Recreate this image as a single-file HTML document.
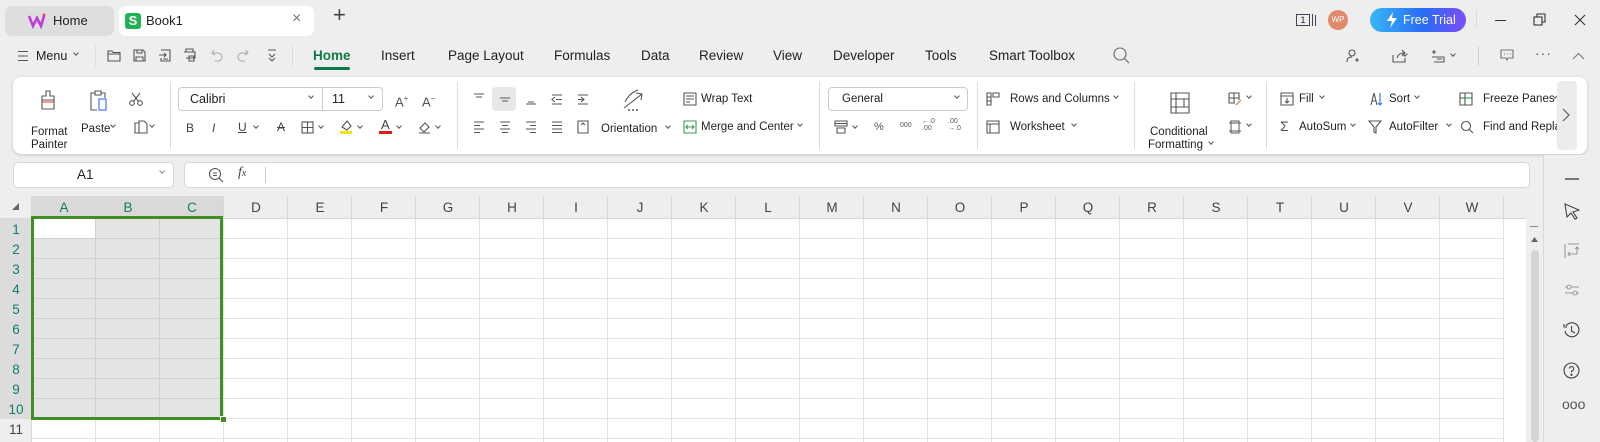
<!DOCTYPE html>
<html><head><meta charset="utf-8"><style>
*{margin:0;padding:0;box-sizing:border-box}
body{width:1600px;height:442px;overflow:hidden;background:#eeeeee;font-family:"Liberation Sans",sans-serif;color:#222;position:relative}
.a{position:absolute}
.t{position:absolute;font-size:11.5px;color:#222;white-space:nowrap;line-height:14px}
.ic{position:absolute;stroke:#555;fill:none;stroke-width:1.1}
.car{position:absolute;width:4px;height:4px;border-right:1.2px solid #555;border-bottom:1.2px solid #555;transform:rotate(45deg)}
.sep{position:absolute;width:1px;background:#dcdcdc}
.ch{position:absolute;top:196px;height:23px;width:64px;text-align:center;font-size:13.5px;line-height:23px;color:#444}
.rh{position:absolute;left:0;width:32px;height:20px;text-align:center;font-size:13.5px;line-height:20px;color:#444}
</style></head><body>
<!-- tabs -->
<div class="a" style="left:5px;top:6px;width:109px;height:30px;background:#dedede;border-radius:7px"></div>
<svg class="a" style="left:28px;top:13px" width="18" height="16" viewBox="0 0 18 16"><path d="M1 3 L5 13 L9 5 L13 13 L16 3" stroke="#c03bd8" stroke-width="2.6" fill="none"/><circle cx="16" cy="2" r="1.5" fill="#e04080"/></svg>
<div class="t" style="left:53px;top:14px;font-size:13px">Home</div>
<div class="a" style="left:119px;top:6px;width:195px;height:30px;background:#fff;border-radius:7px"></div>
<div class="a" style="left:125px;top:13px;width:16px;height:16px;background:#1fb256;border-radius:3px;color:#fff;font-size:13px;font-weight:bold;text-align:center;line-height:16px">S</div>
<div class="t" style="left:146px;top:14px;font-size:13px">Book1</div>
<div class="t" style="left:292px;top:12px;font-size:16px;color:#777">×</div>
<div class="t" style="left:333px;top:8px;font-size:22px;color:#444">+</div>
<!-- top right -->
<div class="a" style="left:1296px;top:14px;width:14px;height:12px;border:1.3px solid #445;font-size:9px;text-align:center;line-height:10px">1</div>
<div class="a" style="left:1312px;top:14px;width:1px;height:12px;background:#445"></div><div class="a" style="left:1315px;top:15px;width:1px;height:11px;background:#445"></div>
<div class="a" style="left:1328px;top:10px;width:20px;height:20px;border-radius:50%;background:#e38a6c;color:#fff;font-size:8px;text-align:center;line-height:20px">WP</div>
<div class="a" style="left:1370px;top:8px;width:96px;height:24px;border-radius:12px;background:linear-gradient(90deg,#38b6f7,#2a6cf6 55%,#7b4df5);color:#fff;font-size:12.5px;line-height:24px;padding-left:33px">Free Trial</div>
<svg class="a" style="left:1386px;top:12px" width="12" height="16" viewBox="0 0 12 16"><path d="M7 0 L1 9 H6 L4 16 L11 6 H6 Z" fill="#fff"/></svg>
<div class="sep" style="left:1476px;top:10px;height:18px"></div>
<div class="a" style="left:1495px;top:20px;width:11px;height:1.3px;background:#333"></div>
<svg class="ic" style="left:1533px;top:13px;stroke:#333" width="14" height="14"><rect x="1" y="4" width="8" height="8"/><path d="M4 4V1H12V9H9"/></svg>
<svg class="ic" style="left:1574px;top:14px;stroke:#333" width="12" height="12"><path d="M1 1L11 11M11 1L1 11"/></svg>
<!-- menu row -->
<svg class="ic" style="left:17px;top:50px" width="12" height="12"><path d="M1 1.5H11M1 6H11M1 10.5H11"/></svg>
<div class="t" style="left:36px;top:49px;font-size:12.5px">Menu</div>
<div class="car" style="left:74px;top:51px"></div>
<div class="sep" style="left:95px;top:46px;height:20px"></div>
<svg class="ic" style="left:107px;top:49px" width="14" height="13"><path d="M1 2H5L6 3.5H13V12H1Z M1 5H13"/></svg>
<svg class="ic" style="left:133px;top:49px" width="13" height="13"><path d="M1 1H10L12 3V12H1Z M4 1V4H9V1 M3 12V8H10V12"/></svg>
<svg class="ic" style="left:158px;top:49px" width="13" height="13"><path d="M3 1H12V12H3V9 M1 6H8M6 4L8 6L6 8 M5 10H10"/></svg>
<svg class="ic" style="left:183px;top:48px" width="14" height="14"><path d="M3 4V1H10V4 M1 4H12V10H3 M6 8H11V13H6Z"/></svg>
<svg class="ic" style="left:211px;top:49px;stroke:#aaa" width="12" height="13"><path d="M3 1L1 4L4 6 M1 4H7A4 4 0 0 1 7 12H4"/></svg>
<svg class="ic" style="left:237px;top:49px;stroke:#aaa" width="12" height="13"><path d="M9 1L11 4L8 6 M11 4H5A4 4 0 0 0 5 12H8"/></svg>
<svg class="ic" style="left:266px;top:48px" width="12" height="14"><path d="M2 2H10 M3 6L6 9L9 6 M3 10L6 13L9 10"/></svg>
<div class="sep" style="left:292px;top:46px;height:20px"></div>
<div class="t" style="left:313px;top:49px;font-size:13.5px;font-weight:bold;color:#0e7a4a">Home</div>
<div class="a" style="left:314px;top:67px;width:36px;height:2.5px;background:#0e7a4a;border-radius:2px"></div>
<div class="t" style="left:381px;top:49px;font-size:13.5px">Insert</div>
<div class="t" style="left:448px;top:49px;font-size:13.5px">Page Layout</div>
<div class="t" style="left:554px;top:49px;font-size:13.5px">Formulas</div>
<div class="t" style="left:641px;top:49px;font-size:13.5px">Data</div>
<div class="t" style="left:699px;top:49px;font-size:13.5px">Review</div>
<div class="t" style="left:773px;top:49px;font-size:13.5px">View</div>
<div class="t" style="left:833px;top:49px;font-size:13.5px">Developer</div>
<div class="t" style="left:925px;top:49px;font-size:13.5px">Tools</div>
<div class="t" style="left:989px;top:49px;font-size:13.5px">Smart Toolbox</div>
<svg class="ic" style="left:1113px;top:47px;stroke:#666" width="17" height="17"><circle cx="7" cy="7" r="6"/><path d="M11.5 11.5L16 16"/></svg>
<svg class="ic" style="left:1346px;top:49px" width="14" height="14"><circle cx="6" cy="4" r="3"/><path d="M1 13C1 9 3 8 6 8 M9 11H13M11 9V13"/></svg>
<svg class="ic" style="left:1392px;top:49px" width="16" height="14"><path d="M1 6V13H13V9 M5 9C6 5 9 4 12 4 M10 1L13 4L10 7"/></svg>
<div class="car" style="left:1403px;top:52px"></div>
<svg class="ic" style="left:1431px;top:49px" width="14" height="14"><path d="M3 1V5M1 3H5 M1 8H13V13H3 M6 10H11"/></svg>
<div class="car" style="left:1451px;top:52px"></div>
<div class="sep" style="left:1478px;top:46px;height:20px;background:#d0d0d0"></div>
<svg class="ic" style="left:1500px;top:49px;stroke:#777" width="14" height="13"><path d="M1 1H13V9H8L7 11L6 9H1Z M4 5H5M7 5H8M10 5H11"/></svg>
<div class="t" style="left:1535px;top:46px;font-size:14px;color:#555;letter-spacing:1px">···</div>
<svg class="ic" style="left:1572px;top:52px;stroke:#777" width="13" height="8"><path d="M1 7L6.5 1.5L12 7"/></svg>
<!-- ribbon -->
<div class="a" style="left:13px;top:77px;width:1574px;height:77px;background:#fff;border-radius:8px;box-shadow:0 1px 3px rgba(0,0,0,.18)"></div>
<svg class="ic" style="left:39px;top:90px" width="20" height="20"><path d="M7 1H11V6H15V10H3V6H7Z M3 10V19H15V10"/><path d="M3 12H15" stroke="#d9541e"/></svg>
<div class="t" style="left:31px;top:125px">Format</div><div class="t" style="left:31px;top:138px">Painter</div>
<svg class="ic" style="left:89px;top:90px" width="20" height="22"><path d="M6 3H2V20H8 M12 3H16V8 M6 1H12V5H6Z"/><rect x="10" y="9" width="7" height="11" stroke="#2a6cf6"/></svg>
<div class="t" style="left:81px;top:122px">Paste</div><div class="car" style="left:111px;top:123px"></div>
<svg class="ic" style="left:129px;top:92px" width="14" height="14"><circle cx="3" cy="11" r="2.3"/><circle cx="11" cy="11" r="2.3"/><path d="M4.5 9.5L11 1M9.5 9.5L3 1"/></svg>
<svg class="ic" style="left:134px;top:120px" width="14" height="14"><path d="M5 3H1V13H5 M5 1H10L13 4V13H5Z"/></svg>
<div class="car" style="left:150px;top:123px"></div>
<div class="sep" style="left:170px;top:82px;height:67px"></div>
<div class="a" style="left:178px;top:87px;width:205px;height:24px;border:1px solid #ccc;border-radius:4px"></div>
<div class="a" style="left:322px;top:87px;width:1px;height:24px;background:#ccc"></div>
<div class="t" style="left:190px;top:92px;font-size:12.5px">Calibri</div><div class="car" style="left:309px;top:94px"></div>
<div class="t" style="left:332px;top:92px;font-size:12.5px">11</div><div class="car" style="left:369px;top:94px"></div>
<div class="t" style="left:395px;top:92px;font-size:13px;color:#555">A<sup style="font-size:8px">+</sup></div>
<div class="t" style="left:422px;top:92px;font-size:13px;color:#555">A<sup style="font-size:8px">−</sup></div>
<div class="t" style="left:186px;top:121px;font-size:12px;color:#444">B</div>
<div class="t" style="left:212px;top:121px;font-size:12px;color:#444;font-style:italic">I</div>
<div class="t" style="left:238px;top:120px;font-size:12px;color:#444;text-decoration:underline">U</div><div class="car" style="left:254px;top:124px"></div>
<div class="t" style="left:277px;top:120px;font-size:12px;color:#444;text-decoration:line-through">A</div>
<svg class="ic" style="left:301px;top:121px" width="13" height="13"><rect x="1" y="1" width="11" height="11"/><path d="M6.5 1V12M1 6.5H12"/></svg><div class="car" style="left:319px;top:124px"></div>
<svg class="ic" style="left:339px;top:119px" width="14" height="15"><path d="M3 8L8 2L12 7L8 11Z"/><rect x="1" y="12" width="12" height="3" fill="#f5e21a" stroke="none"/></svg><div class="car" style="left:358px;top:124px"></div>
<div class="t" style="left:381px;top:118px;font-size:13px;color:#444">A</div><div class="a" style="left:379px;top:131px;width:13px;height:3px;background:#e01e1e"></div><div class="car" style="left:397px;top:124px"></div>
<svg class="ic" style="left:418px;top:120px" width="14" height="14"><path d="M2 8L7 3L11 7L6 12Z M1 13H12"/></svg><div class="car" style="left:436px;top:124px"></div>
<div class="sep" style="left:457px;top:82px;height:67px"></div>
<div class="a" style="left:492px;top:87px;width:24px;height:24px;background:#e7e7e7;border-radius:4px"></div>
<svg class="ic" style="left:472px;top:92px" width="120" height="14"><path d="M2 2H12 M4 5H10"/><path d="M28 6H38M30 9H36"/><path d="M54 12H64M56 10H62"/><path d="M80 3H90M80 12H90M84 7.5H90 M83 5L80 7.5L83 10" /><path d="M106 3H116M106 12H116M106 7.5H112 M109 5L112 7.5L109 10"/></svg>
<svg class="ic" style="left:472px;top:120px" width="120" height="14"><path d="M2 2H12M2 5.5H8M2 9H12M2 12.5H8"/><path d="M28 2H38M30 5.5H36M28 9H38M30 12.5H36"/><path d="M54 2H64M58 5.5H64M54 9H64M58 12.5H64"/><path d="M80 2H90M80 5.5H90M80 9H90M80 12.5H90"/><path d="M106 1H116V13H106Z M109 5L111 3L113 5"/></svg>
<svg class="ic" style="left:622px;top:88px" width="22" height="24"><path d="M3 14C6 8 10 4 16 2 M2 20L20 6 M14 5L20 6L19 12"/><path d="M6 22H8M10 22H12M14 22H16" stroke-width="1.5"/></svg>
<div class="t" style="left:601px;top:122px">Orientation</div><div class="car" style="left:666px;top:124px"></div>
<svg class="ic" style="left:683px;top:92px" width="14" height="14"><path d="M1 1H13V13H1Z M3 4H11M3 7H11M3 10H7"/></svg>
<div class="t" style="left:701px;top:92px">Wrap Text</div>
<svg class="ic" style="left:683px;top:120px;stroke:#3a9a5a" width="14" height="14"><path d="M1 1H13V13H1Z M3 7H11 M5 5L3 7L5 9 M9 5L11 7L9 9"/></svg>
<div class="t" style="left:701px;top:120px">Merge and Center</div><div class="car" style="left:798px;top:122px"></div>
<div class="sep" style="left:819px;top:82px;height:67px"></div>
<div class="a" style="left:828px;top:87px;width:140px;height:24px;border:1px solid #ccc;border-radius:4px"></div>
<div class="t" style="left:842px;top:92px">General</div><div class="car" style="left:955px;top:94px"></div>
<svg class="ic" style="left:834px;top:120px" width="14" height="14"><path d="M1 1H13V6H1Z M3 8H11V13H3Z M1 3.5H13"/></svg><div class="car" style="left:853px;top:124px"></div>
<div class="t" style="left:874px;top:120px;font-size:11px;color:#555">%</div>
<div class="t" style="left:900px;top:119px;font-size:7px;color:#555">000</div>
<div class="t" style="left:922px;top:118px;font-size:7px;color:#555;line-height:7px">←.0<br>.00</div>
<div class="t" style="left:948px;top:118px;font-size:7px;color:#555;line-height:7px">.00<br>→.0</div>
<div class="sep" style="left:977px;top:82px;height:67px"></div>
<svg class="ic" style="left:986px;top:92px" width="14" height="14"><path d="M1 1H5V13H1Z M1 5H5M1 9H5 M7 1H13V5H7Z"/></svg>
<div class="t" style="left:1010px;top:92px">Rows and Columns</div><div class="car" style="left:1114px;top:94px"></div>
<svg class="ic" style="left:986px;top:120px" width="14" height="14"><path d="M1 1H13V13H1Z M1 4H13 M4 4V13"/></svg>
<div class="t" style="left:1010px;top:120px">Worksheet</div><div class="car" style="left:1072px;top:122px"></div>
<div class="sep" style="left:1134px;top:82px;height:67px"></div>
<svg class="ic" style="left:1170px;top:92px" width="20" height="22"><path d="M1 1H19V21H1Z M1 7H19M1 15H19M6 1V21M14 7V15"/></svg>
<div class="t" style="left:1150px;top:125px">Conditional</div><div class="t" style="left:1148px;top:138px">Formatting</div><div class="car" style="left:1209px;top:140px"></div>
<svg class="ic" style="left:1228px;top:92px" width="14" height="14"><path d="M1 1H11V8 M1 1V11H7 M1 6H11M6 1V11"/><path d="M8 13L13 8" stroke="#e0702a"/></svg><div class="car" style="left:1247px;top:94px"></div>
<svg class="ic" style="left:1228px;top:120px" width="14" height="14"><path d="M3 1H11V13H3Z M1 3H13M1 11H13" stroke-width="1"/></svg><div class="car" style="left:1247px;top:122px"></div>
<div class="sep" style="left:1266px;top:82px;height:67px"></div>
<svg class="ic" style="left:1280px;top:92px" width="14" height="14"><path d="M1 1H13V13H1Z M1 4H13 M7 6V11M5 9L7 11L9 9"/></svg>
<div class="t" style="left:1299px;top:92px">Fill</div><div class="car" style="left:1320px;top:94px"></div>
<svg class="ic" style="left:1370px;top:92px" width="14" height="14"><path d="M1 13L4 1L7 13M2 9H6"/><path d="M10 1V13M8 11L10 13L12 11" stroke="#2a6cf6"/></svg>
<div class="t" style="left:1389px;top:92px">Sort</div><div class="car" style="left:1415px;top:94px"></div>
<svg class="ic" style="left:1459px;top:92px" width="14" height="14"><path d="M1 1H13V13H1Z M1 6H13M6 1V13"/><path d="M6 6H13M6 6V13" stroke="#1a8a4a"/></svg>
<div class="t" style="left:1483px;top:92px">Freeze Panes</div><div class="car" style="left:1553px;top:94px"></div>
<div class="t" style="left:1280px;top:119px;font-size:14px;color:#555">Σ</div>
<div class="t" style="left:1299px;top:120px">AutoSum</div><div class="car" style="left:1351px;top:122px"></div>
<svg class="ic" style="left:1368px;top:120px" width="14" height="14"><path d="M1 1H13L8 7V13L6 12V7Z"/></svg>
<div class="t" style="left:1389px;top:120px">AutoFilter</div><div class="car" style="left:1447px;top:122px"></div>
<svg class="ic" style="left:1460px;top:120px" width="14" height="14"><circle cx="6" cy="6" r="4.5"/><path d="M9.5 9.5L13 13"/></svg>
<div class="a" style="left:1480px;top:115px;width:77px;height:20px;overflow:hidden"><div class="t" style="left:3px;top:5px">Find and Replace</div></div>
<div class="a" style="left:1557px;top:81px;width:20px;height:69px;background:#ececec;border-radius:4px"></div>
<svg class="ic" style="left:1562px;top:108px;stroke:#555" width="8" height="14"><path d="M1 1L7 7L1 13"/></svg>
<!-- formula bar -->
<div class="a" style="left:13px;top:162px;width:161px;height:26px;background:#fff;border:1px solid #d8d8d8;border-radius:5px"></div>
<div class="t" style="left:77px;top:168px;font-size:13.5px">A1</div><div class="car" style="left:160px;top:169px;border-color:#888"></div>
<div class="a" style="left:184px;top:162px;width:1346px;height:26px;background:#fff;border:1px solid #d8d8d8;border-radius:5px"></div>
<svg class="ic" style="left:208px;top:167px;stroke:#555" width="16" height="16"><circle cx="7" cy="7" r="5.5"/><path d="M11 11L15 15 M5 6H9M5 8.5H9"/></svg>
<div class="t" style="left:238px;top:166px;font-size:14px;font-style:italic;font-family:'Liberation Serif',serif;color:#444">f<span style="font-size:10px">x</span></div>
<div class="a" style="left:265px;top:167px;width:1px;height:16px;background:#ccc"></div>
<!-- grid -->
<div class="a" style="left:32px;top:219px;width:1494px;height:223px;background-color:#fff;background-image:linear-gradient(90deg,transparent 63px,#e2e2e2 63px),linear-gradient(180deg,transparent 19px,#e2e2e2 19px);background-size:64px 20px"></div>
<div class="a" style="left:0;top:196px;width:1526px;height:23px;background:#eeeeee;border-bottom:1px solid #d8d8d8;background-image:linear-gradient(90deg,transparent 63px,#d8d8d8 63px);background-size:64px 23px;background-position:32px 0"></div>
<div class="a" style="left:0;top:219px;width:32px;height:223px;background:#eeeeee;border-right:1px solid #d8d8d8"></div>
<div class="a" style="left:32px;top:196px;width:191px;height:23px;background:#d9d9d9"></div>
<div class="a" style="left:0;top:219px;width:32px;height:200px;background:#dcdcdc"></div>
<svg class="a" style="left:11px;top:202px" width="9" height="9"><path d="M8 1V8H1Z" fill="#666"/></svg>
<div class="a" style="left:32px;top:219px;width:191px;height:200px;background-color:#e4e4e4;background-image:linear-gradient(90deg,transparent 63px,#d0d0d0 63px),linear-gradient(180deg,transparent 19px,#d0d0d0 19px);background-size:64px 20px"></div>
<div class="a" style="left:34px;top:219px;width:61px;height:19px;background:#fff"></div>
<div class="a" style="left:31px;top:216px;width:192px;height:204px;border:3px solid #3f8f24"></div>
<div class="a" style="left:220px;top:416px;width:7px;height:7px;background:#3f8f24;border:1px solid #fff"></div>
<div class="ch" style="left:32px;color:#0f8060">A</div><div class="ch" style="left:96px;color:#0f8060">B</div><div class="ch" style="left:160px;color:#0f8060">C</div>
<div class="ch" style="left:224px">D</div><div class="ch" style="left:288px">E</div><div class="ch" style="left:352px">F</div><div class="ch" style="left:416px">G</div><div class="ch" style="left:480px">H</div><div class="ch" style="left:544px">I</div><div class="ch" style="left:608px">J</div><div class="ch" style="left:672px">K</div><div class="ch" style="left:736px">L</div><div class="ch" style="left:800px">M</div><div class="ch" style="left:864px">N</div><div class="ch" style="left:928px">O</div><div class="ch" style="left:992px">P</div><div class="ch" style="left:1056px">Q</div><div class="ch" style="left:1120px">R</div><div class="ch" style="left:1184px">S</div><div class="ch" style="left:1248px">T</div><div class="ch" style="left:1312px">U</div><div class="ch" style="left:1376px">V</div><div class="ch" style="left:1440px">W</div>
<div class="rh" style="top:220px;color:#0f8060">1</div><div class="rh" style="top:240px;color:#0f8060">2</div><div class="rh" style="top:260px;color:#0f8060">3</div><div class="rh" style="top:280px;color:#0f8060">4</div><div class="rh" style="top:300px;color:#0f8060">5</div><div class="rh" style="top:320px;color:#0f8060">6</div><div class="rh" style="top:340px;color:#0f8060">7</div><div class="rh" style="top:360px;color:#0f8060">8</div><div class="rh" style="top:380px;color:#0f8060">9</div><div class="rh" style="top:400px;color:#0f8060">10</div><div class="rh" style="top:420px">11</div>
<!-- scrollbar -->
<div class="a" style="left:1504px;top:219px;width:22px;height:223px;background:#fff"></div>
<div class="a" style="left:1526px;top:196px;width:17px;height:246px;background:#eeeeee"></div>
<div class="a" style="left:1530px;top:226px;width:8px;height:1px;background:#888"></div>
<svg class="a" style="left:1531px;top:237px" width="7" height="5"><path d="M3.5 0L7 5H0Z" fill="#666"/></svg>
<div class="a" style="left:1531px;top:250px;width:8px;height:192px;background:#d4d4d4;border-radius:4px"></div>
<!-- side panel -->
<div class="a" style="left:1543px;top:155px;width:57px;height:287px;background:#eeeeee;border-left:1px solid #d8d8d8"></div>
<div class="a" style="left:1565px;top:178px;width:14px;height:1.5px;background:#777"></div>
<svg class="ic" style="left:1564px;top:203px;stroke:#444" width="16" height="17"><path d="M1 1L15 7L9 9L13 15L11 16L7 10L3 14Z"/></svg>
<svg class="ic" style="left:1564px;top:243px;stroke:#999" width="16" height="16"><path d="M1 1V15 M4 1H15 M13 4V11H4 M6 9L4 11L6 13 M11 6L13 4L15 6"/></svg>
<svg class="ic" style="left:1564px;top:283px;stroke:#999" width="16" height="14"><path d="M1 4H15M1 10H15"/><circle cx="5" cy="4" r="2" fill="#eee"/><circle cx="11" cy="10" r="2" fill="#eee"/></svg>
<svg class="ic" style="left:1563px;top:322px;stroke:#444" width="17" height="17"><path d="M3 4A7 7 0 1 1 2 9 M1 2V5H4 M8.5 4V9L12 11"/></svg>
<svg class="ic" style="left:1563px;top:362px;stroke:#444" width="17" height="17"><circle cx="8.5" cy="8.5" r="7.5"/><path d="M6.3 6.5A2.2 2.2 0 1 1 8.5 9V10.5"/><circle cx="8.5" cy="12.8" r=".6" fill="#444"/></svg>
<div class="t" style="left:1562px;top:397px;font-size:14px;color:#555">ooo</div>
</body></html>
